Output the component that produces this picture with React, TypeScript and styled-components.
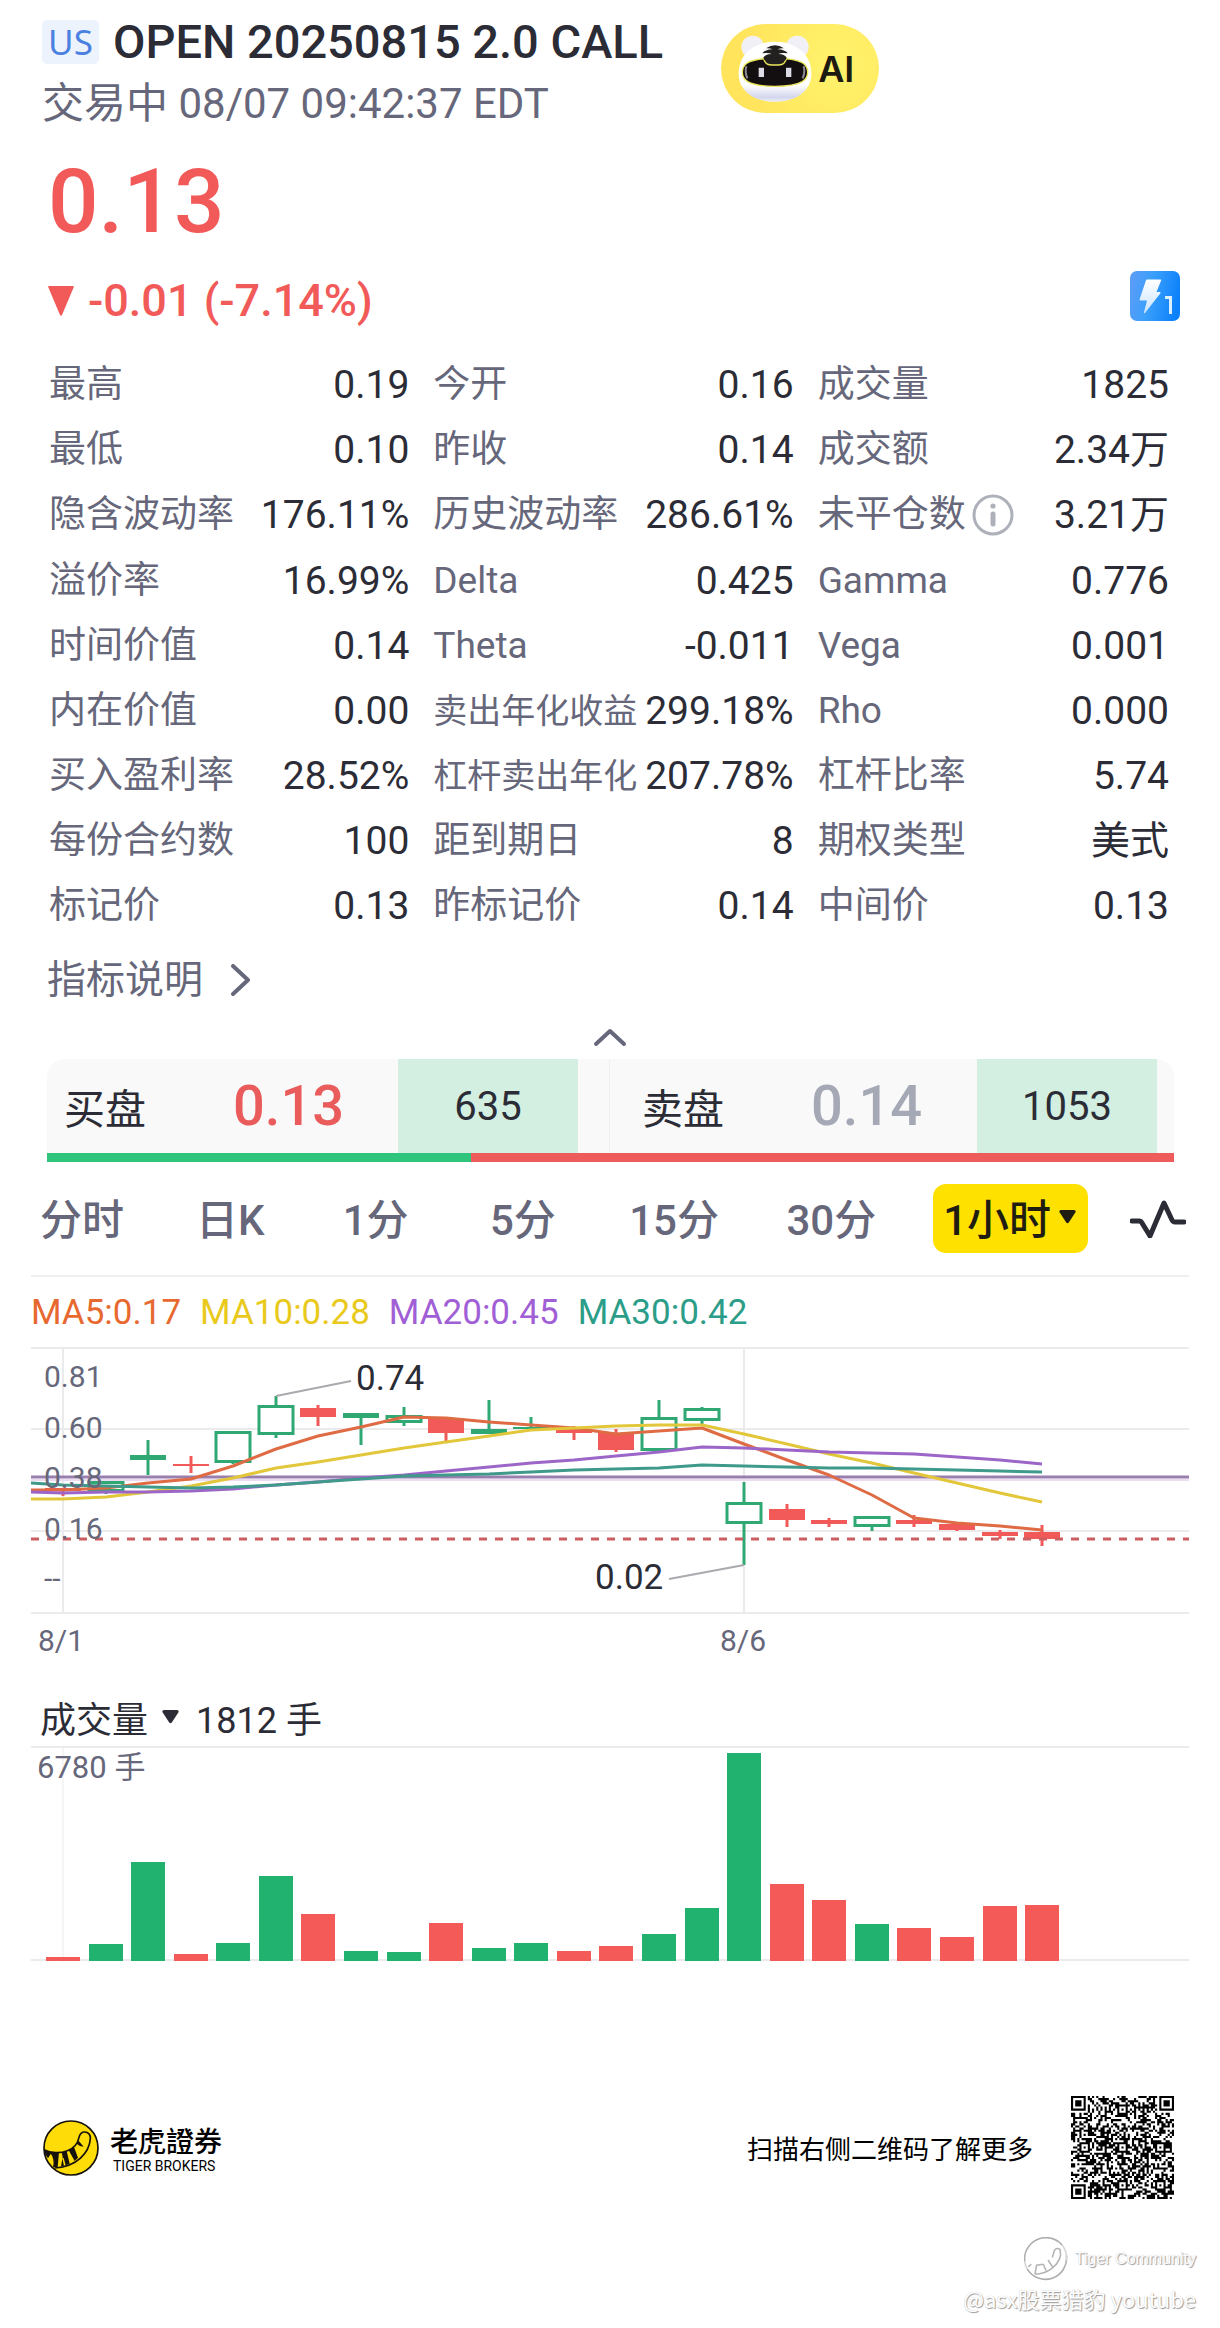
import React from "react";
import styled, { createGlobalStyle } from "styled-components";

const color = {
  ink: "#2b2c36",
  muted: "#66677a",
  faint: "#a5a9b5",
  red: "#f15a58",
  green: "#20b26e",
  candleGreen: "#2fa873",
  grid: "#ebebed",
};

const sans = `Roboto, "Noto Sans CJK SC", sans-serif`;

const GlobalStyle = createGlobalStyle`
  * { box-sizing: border-box; }
  body { margin: 0; background: #fff; color: ${color.ink}; font-family: ${sans}; }
  button { margin: 0; padding: 0; border: 0; background: none; color: inherit; font: inherit; cursor: pointer; }
  svg { display: block; }
`;

const Page = styled.main`
  display: flex;
  flex-direction: column;
  padding: 17px 0 12px;
`;

/* ---------- header ---------- */

const Header = styled.header`
  display: flex;
  align-items: flex-start;
  gap: 58px;
  padding: 0 42px;
`;

const TitleRow = styled.div`
  display: flex;
  align-items: center;
  gap: 14px;
  height: 50px;
`;

const Market = styled.span`
  display: grid;
  place-items: center;
  width: 57px;
  height: 44px;
  border-radius: 5px;
  background: #edf3fd;
  color: #4a80e0;
  font: 400 35px/44px "Noto Sans", sans-serif;
`;

const Title = styled.h1`
  margin: 0;
  font-size: 47px;
  font-weight: 500;
  line-height: 50px;
  white-space: nowrap;
`;

const Session = styled.p`
  margin: 8px 0 0;
  color: ${color.muted};
  font-size: 42px;
  line-height: 58px;
  white-space: nowrap;
`;

const AiButton = styled.button`
  display: flex;
  align-items: center;
  gap: 6px;
  width: 158px;
  height: 89px;
  margin-top: 7px;
  padding-left: 17px;
  border-radius: 45px;
  background: radial-gradient(circle at 72% 45%, #fff26c 0, #ffee66 30%, #ffe45c 75%);
  color: #1d1a12;
  font: 600 36px/44px Inter, sans-serif;
`;

const Quote = styled.section`
  padding: 21px 40px 0 48px;
  color: ${color.red};
  font-weight: 500;
`;

const Price = styled.div`
  font-size: 89px;
  line-height: 96px;
`;

const ChangeRow = styled.div`
  display: flex;
  justify-content: space-between;
  align-items: flex-start;
  margin-top: 21px;
`;

const Change = styled.div`
  display: flex;
  align-items: center;
  gap: 14px;
  font-size: 45px;
  line-height: 60px;
`;

/* ---------- metrics ---------- */

const Metrics = styled.dl`
  display: grid;
  grid-template-columns: 361fr 361fr 352fr;
  column-gap: 24px;
  margin: 21px 0 0;
  padding: 0 51px 0 49px;
`;

const Metric = styled.div`
  display: flex;
  align-items: center;
  justify-content: space-between;
  min-height: 65px;
  white-space: nowrap;
`;

const MetricName = styled.dt<{ $compact?: boolean; $tall?: boolean }>`
  display: flex;
  align-items: center;
  gap: 6px;
  padding: ${(p) => (p.$tall ? "7px 0" : "0")};
  color: ${color.muted};
  font-size: ${(p) => (p.$compact ? 34 : 37)}px;
  line-height: 52px;
`;

const MetricValue = styled.dd`
  margin: 0;
  font-size: 39px;
  line-height: 52px;
`;

const Explain = styled.button`
  display: flex;
  align-items: center;
  align-self: flex-start;
  gap: 28px;
  margin: 16px 0 0 47px;
  color: ${color.muted};
  font-size: 39px;
  line-height: 52px;
`;

const Collapse = styled.button`
  align-self: center;
  margin-top: 19px;
  padding: 2px 8px;
`;

/* ---------- bid / ask ---------- */

const Book = styled.section`
  margin: 10px 46px 0 47px;
`;

const BookRow = styled.div`
  display: grid;
  grid-template-columns: 562fr 565fr;
  height: 94px;
  border-radius: 18px 18px 0 0;
  background: #f9f9f9;
`;

const Side = styled.div<{ $ask?: boolean }>`
  display: grid;
  grid-template-columns: 169px 1fr 180px;
  align-items: center;
  padding: ${(p) => (p.$ask ? "0 17px 0 32px" : "0 31px 0 17px")};
  border-left: ${(p) => (p.$ask ? "1px solid #efeff1" : "0")};
  font-size: 41px;
`;

const SidePrice = styled.strong<{ $tone: string }>`
  color: ${(p) => p.$tone};
  font-size: 56px;
  font-weight: 500;
`;

const SideSize = styled.span`
  display: grid;
  place-items: center;
  height: 94px;
  background: #d2efe1;
  font-size: 40px;
`;

const Ratio = styled.div`
  display: grid;
  grid-template-columns: 424fr 703fr;
  height: 9px;
  background: #ed5b5b;

  &::before {
    content: "";
    background: #2fc57d;
  }
`;

/* ---------- periods ---------- */

const PeriodBar = styled.nav`
  display: grid;
  grid-template-columns: 148fr 148fr 142fr 152fr 150fr 164fr 194fr 100fr;
  align-items: center;
  justify-items: center;
  padding: 22px 12px 22px 8px;
  white-space: nowrap;
`;

const Period = styled.button<{ $active?: boolean }>`
  display: flex;
  align-items: center;
  gap: 8px;
  height: 69px;
  padding: ${(p) => (p.$active ? "0 12px 4px 10px" : "0 0 4px")};
  border-radius: 13px;
  background: ${(p) => (p.$active ? "#ffe100" : "none")};
  color: ${(p) => (p.$active ? "#1f1d12" : color.muted)};
  font-size: 42px;
  font-weight: 500;
`;

/* ---------- charts ---------- */

const ChartPanel = styled.section<{ $ruled?: boolean }>`
  margin: 0 31px;
  border-top: ${(p) => (p.$ruled ? "2px solid #efeff0" : "0")};
`;

const Averages = styled.div`
  display: flex;
  align-items: center;
  gap: 19px;
  height: 70px;
  font-size: 35px;
`;

const Average = styled.span<{ $tone: string }>`
  color: ${(p) => p.$tone};
`;

const Plot = styled.svg`
  width: 100%;
  height: auto;
  font-family: ${sans};
`;

const VolumeHead = styled.div`
  display: flex;
  align-items: center;
  gap: 17px;
  height: 52px;
  margin-top: 27px;
  padding: 0 0 6px 9px;
  font-size: 36px;
`;

const VolumePick = styled.button`
  display: flex;
  align-items: center;
  gap: 14px;
`;

/* ---------- footer ---------- */

const Footer = styled.footer`
  display: flex;
  align-items: center;
  justify-content: space-between;
  margin-top: 134px;
  padding: 0 46px 0 43px;
`;

const Brand = styled.div`
  display: flex;
  align-items: center;
  gap: 11px;
  color: #000;
`;

const BrandName = styled.div`
  font: 500 28px/36px "Noto Sans CJK TC", sans-serif;
`;

const BrandLatin = styled.div`
  padding-left: 3px;
  font-size: 14px;
  line-height: 16px;
`;

const Scan = styled.div`
  display: flex;
  align-items: center;
  gap: 38px;
  color: #000;
  font-size: 26px;
`;

const Credit = styled.aside`
  display: flex;
  flex-direction: column;
  align-items: flex-end;
  margin-top: 38px;
  padding-right: 24px;
  color: #fff;
  text-shadow: 1px 1px 1px #9a9a9a, 0 0 1px #c4c4c4;
`;

const CreditBrand = styled.div`
  display: flex;
  align-items: center;
  gap: 7px;
  font: 400 16px/44px "Liberation Sans", Arial, sans-serif;
`;

const CreditUser = styled.div`
  font: 400 22px/34px "Noto Sans CJK SC", sans-serif;
`;

/* ---------- drawings ---------- */

const Caret = () => (
  <svg width="17" height="14" viewBox="0 0 17 14" aria-hidden="true">
    <path d="M2 0h13q2.500.3 1.300 2.400L9.800 12.500q-1.300 1.500-2.600 0L.7 2.400Q-.5.3 2 0z" fill="currentColor" />
  </svg>
);

const DownMark = () => (
  <svg width="26" height="30" viewBox="0 0 26 30" aria-hidden="true">
    <path d="M1 0h24q1 0 .7 1.200L14 29q-1 1.500-2 0L.3 1.200Q0 0 1 0z" fill="currentColor" />
  </svg>
);

const Robot = () => (
  <svg width="74" height="68" viewBox="0 0 222 204" aria-hidden="true">
    <defs>
      <linearGradient id="head" x1="0" y1="0" x2="0" y2="1">
        <stop offset="0" stopColor="#fff" />
        <stop offset=".72" stopColor="#fff" />
        <stop offset=".93" stopColor="#d3d6ec" />
        <stop offset="1" stopColor="#efeff8" />
      </linearGradient>
    </defs>
    <circle cx="44" cy="36" r="34" fill="#f1f0f6" />
    <circle cx="178" cy="36" r="34" fill="#f1f0f6" />
    <path d="M111 20c66 0 109 40 109 96 0 52-46 84-109 84S2 168 2 116c0-56 43-96 109-96z" fill="url(#head)" />
    <path d="M111 70c34 0 64 3 82 13 11 7 16 17 16 28s-5 22-16 29c-18 10-48 14-82 14s-64-4-82-14c-11-7-16-18-16-29s5-21 16-28c18-10 48-13 82-13z" fill="#130f10" stroke="#ebe65c" strokeWidth="4" />
    <path d="M25 94q-5 18 3 36M197 94q5 18-3 36" fill="none" stroke="#8d8a95" strokeWidth="6" />
    <path d="M76 68q4 22 24 22h22q20 0 24-22" fill="#22211f" stroke="#ebe65c" strokeWidth="4" />
    <path d="M84 40q27-18 54 0-12-1-19 3 22 1 30 12-18-3-28 2 20 1 25 11l-4 8H80l-4-8q5-10 25-11-10-5-28-2 8-11 30-12-7-4-19-3z" fill="#22211f" />
    <path d="M62 98h16v28H62zM144 98h16v28h-16z" fill="#dcdbe6" />
  </svg>
);

const LevelOne = () => (
  <svg width="50" height="50" viewBox="0 0 50 50" role="img" aria-label="Level 1">
    <defs>
      <linearGradient id="lv" x1="0" y1="0.3" x2="1" y2="0.5">
        <stop offset="0" stopColor="#5b9cf6" />
        <stop offset=".4" stopColor="#3ba0fb" />
        <stop offset="1" stopColor="#0b80fb" />
      </linearGradient>
      <linearGradient id="bolt" x1="0" y1="0" x2="0" y2="1">
        <stop offset="0" stopColor="#fff" />
        <stop offset="1" stopColor="#c9e4ff" />
      </linearGradient>
    </defs>
    <rect width="50" height="50" rx="7" fill="url(#lv)" />
    <path d="M17 8.500h13.500q1 0 .6 1L26.500 21H30q1 .2.400 1.200L15 42q-1.300 1-1-.8L17 29.500h-6.500q-1.300-.1-.8-1.400l6.200-18.700q.3-.9 1.100-.9z" fill="url(#bolt)" />
    <path d="M35 26.500h5.500V43" fill="none" stroke="#dcefff" strokeWidth="3" />
  </svg>
);

const Info = () => (
  <svg width="42" height="42" viewBox="0 0 42 42" role="img" aria-label="info">
    <circle cx="21" cy="21" r="19" fill="none" stroke="#aeb1ba" strokeWidth="3" />
    <circle cx="21" cy="12" r="2.600" fill="#aeb1ba" />
    <path d="M21 20v10" stroke="#aeb1ba" strokeWidth="5" strokeLinecap="round" />
  </svg>
);

const Pulse = () => (
  <svg width="56" height="38" viewBox="0 0 56 38" role="img" aria-label="indicators">
    <path d="M2 21h7q2 0 3 2l8 13L34 3l8 17q1 2 3 2h9" fill="none" stroke="#2b2c36" strokeWidth="5" strokeLinecap="round" strokeLinejoin="round" />
  </svg>
);

const TigerLogo = () => (
  <svg width="56" height="56" viewBox="130 118 168 168" aria-hidden="true">
    <circle cx="214" cy="202" r="81" fill="#fddc07" stroke="#16120a" strokeWidth="5" />
    <path d="M133 207c20 10 48 12 70 3 22-8 32-24 35-40 3-12 9-16 17-16 11 0 18 8 17 20-3 42-40 84-107 88" fill="none" stroke="#16120a" strokeWidth="5" />
    <path d="M132 206l23 11-10 16q-11-12-13-27zM150 214l28 1-4 44-14 1q7-24-10-46zM186 215l15-4 9 38-12 5-6-22-4 1 5 22-9 2 5-28zM207 209l16-10 12 32-10 10zM231 189l6-9 15 18q-12 0-21-9z" fill="#16120a" />
  </svg>
);

const TigerOutline = () => (
  <svg width="44" height="44" viewBox="130 118 168 168" aria-hidden="true">
    <g fill="none" strokeWidth="6">
      <path d="M133 212a81 81 0 0 1 24-68 81 81 0 0 1 118 4M292 188a81 81 0 0 1-150 52" stroke="#adadad" />
      <path d="M275 148a81 81 0 0 1 17 60M142 240q-8-14-9-28" stroke="#d6d6d6" />
      <path d="M146 232l12-10M172 260l6-34 26-4M204 222l10 24M222 206l18 28M238 196l8-26q8-14 22-4 10 40-34 74-26 20-62 20" stroke="#b4b4b4" />
    </g>
  </svg>
);

const QR_SIZE = 49;

function qrModules() {
  const cells: boolean[][] = [];
  let seed = 20250815;
  for (let y = 0; y < QR_SIZE; y++) {
    cells.push([]);
    for (let x = 0; x < QR_SIZE; x++) {
      seed = (Math.imul(seed, 1664525) + 1013904223) >>> 0;
      cells[y].push(seed >>> 16 > 32000);
    }
  }
  const ring = (cx: number, cy: number, reach: number, light: number[]) => {
    for (let dy = -reach; dy <= reach; dy++)
      for (let dx = -reach; dx <= reach; dx++) {
        const row = cells[cy + dy];
        if (!row || cx + dx < 0 || cx + dx >= QR_SIZE) continue;
        row[cx + dx] = !light.includes(Math.max(Math.abs(dx), Math.abs(dy)));
      }
  };
  for (let i = 8; i < QR_SIZE - 8; i++) {
    cells[6][i] = i % 2 === 0;
    cells[i][6] = i % 2 === 0;
  }
  [[24, 6], [6, 24], [24, 24], [42, 24], [24, 42], [42, 42]].forEach(([x, y]) => ring(x, y, 2, [1]));
  [[3, 3], [QR_SIZE - 4, 3], [3, QR_SIZE - 4]].forEach(([x, y]) => ring(x, y, 4, [2, 4]));
  return cells;
}

const QrCode = () => {
  const d = qrModules()
    .map((row, y) => row.map((on, x) => (on ? `M${x} ${y}h1v1h-1z` : "")).join(""))
    .join("");
  return (
    <svg width="103" height="103" viewBox={`0 0 ${QR_SIZE} ${QR_SIZE}`} role="img" aria-label="QR">
      <path d={d} fill="#000" />
    </svg>
  );
};

/* ---------- data ---------- */

type MetricItem = { name: string; value: string; compact?: boolean; info?: boolean };

const metrics: MetricItem[] = [
  { name: "最高", value: "0.19" },
  { name: "今开", value: "0.16" },
  { name: "成交量", value: "1825" },
  { name: "最低", value: "0.10" },
  { name: "昨收", value: "0.14" },
  { name: "成交额", value: "2.34万" },
  { name: "隐含波动率", value: "176.11%" },
  { name: "历史波动率", value: "286.61%" },
  { name: "未平仓数", value: "3.21万", info: true },
  { name: "溢价率", value: "16.99%" },
  { name: "Delta", value: "0.425" },
  { name: "Gamma", value: "0.776" },
  { name: "时间价值", value: "0.14" },
  { name: "Theta", value: "-0.011" },
  { name: "Vega", value: "0.001" },
  { name: "内在价值", value: "0.00" },
  { name: "卖出年化收益", value: "299.18%", compact: true },
  { name: "Rho", value: "0.000" },
  { name: "买入盈利率", value: "28.52%" },
  { name: "杠杆卖出年化", value: "207.78%", compact: true },
  { name: "杠杆比率", value: "5.74" },
  { name: "每份合约数", value: "100" },
  { name: "距到期日", value: "8" },
  { name: "期权类型", value: "美式" },
  { name: "标记价", value: "0.13" },
  { name: "昨标记价", value: "0.14" },
  { name: "中间价", value: "0.13" },
];

const periods = ["分时", "日K", "1分", "5分", "15分", "30分"];

type Kind = "down" | "up" | "hollow";
/* kind, body top, body bottom, wick top, wick bottom, volume height */
const candles: [Kind, number, number, number, number, number][] = [
  ["down", 141, 144, 141, 149, 4],
  ["hollow", 134, 145, 134, 147, 17],
  ["up", 108, 113, 93, 128, 99],
  ["down", 117, 119, 109, 126, 7],
  ["hollow", 84, 116, 84, 117, 18],
  ["hollow", 58, 88, 49, 91, 85],
  ["down", 61, 70, 58, 79, 47],
  ["up", 66, 71, 66, 98, 10],
  ["hollow", 68, 76, 60, 79, 9],
  ["down", 72, 86, 72, 94, 38],
  ["up", 82, 87, 53, 87, 13],
  ["up", 80, 82, 70, 82, 18],
  ["down", 82, 86, 79, 93, 10],
  ["down", 86, 103, 82, 105, 15],
  ["hollow", 70, 104, 53, 104, 27],
  ["hollow", 61, 74, 60, 78, 53],
  ["hollow", 155, 177, 135, 218, 208],
  ["down", 162, 173, 157, 180, 77],
  ["down", 173, 177, 171, 180, 61],
  ["hollow", 169, 180, 169, 184, 37],
  ["down", 173, 177, 168, 180, 33],
  ["down", 177, 183, 177, 184, 24],
  ["down", 185, 189, 183, 192, 55],
  ["down", 185, 192, 178, 199, 56],
];

const averages = [
  { label: "MA5:0.17", tone: "#e8692f", line: "#df6b44", ys: [143, 143, 141, 136, 132, 119, 102, 89, 80, 70, 71, 75, 78, 81, 87, 84, 81, 97, 113, 128, 148, 171, 176, 179, 183] },
  { label: "MA10:0.28", tone: "#e9c91c", line: "#e2c73a", ys: [152, 152, 150, 145, 139, 131, 121, 115, 108, 101, 95, 89, 83, 81, 79, 78, 78, 87, 97, 107, 116, 126, 136, 146, 155] },
  { label: "MA20:0.45", tone: "#a15fd6", line: "#9c66c8", ys: [145, 146, 145, 145, 144, 142, 138, 135, 131, 128, 124, 120, 116, 113, 109, 105, 100, 101, 103, 105, 106, 107, 110, 113, 117] },
  { label: "MA30:0.42", tone: "#2b9d88", line: "#3f9a8b", ys: [136, 138, 139, 140, 141, 140, 138, 135, 132, 129, 128, 127, 125, 123, 122, 121, 118, 119, 120, 121, 121, 122, 123, 124, 125] },
];

const slotX = (i: number) => Math.round(32 + i * 42.57);

const PriceChart = () => (
  <Plot viewBox="0 0 1158 320" role="img" aria-label="K线图">
    <g stroke={color.grid} strokeWidth="2">
      <path d="M0 1H1158M0 82H1158M0 184H1158M0 266H1158M32 0V266M713 0V266" />
      <path d="M0 133H1158" stroke="#ecdcf2" />
    </g>
    {candles.map(([kind, top, bottom, high, low], i) => {
      const x = slotX(i);
      const tone = kind === "down" ? color.red : color.candleGreen;
      return (
        <g key={i}>
          {kind === "hollow" ? (
            <>
              <path d={`M${x} ${high}V${top}M${x} ${bottom}V${low}`} stroke={tone} strokeWidth="3" />
              <rect x={x - 17} y={top + 1.5} width="34" height={bottom - top - 3} fill="#fff" stroke={tone} strokeWidth="3" />
            </>
          ) : (
            <>
              <path d={`M${x} ${high}V${low}`} stroke={tone} strokeWidth="3" />
              <rect x={x - 18} y={top} width="36" height={bottom - top} fill={tone} />
            </>
          )}
        </g>
      );
    })}
    <path d="M0 130H1158" stroke="#997fae" strokeWidth="3" />
    {averages.map((a) => (
      <polyline
        key={a.label}
        points={a.ys.map((y, i) => `${i === 0 ? 0 : slotX(i - 1)},${y}`).join(" ")}
        fill="none"
        stroke={a.line}
        strokeWidth="3"
        strokeLinejoin="round"
      />
    ))}
    <path d="M0 192H1158" stroke="#cd5d5f" strokeWidth="3" strokeDasharray="8 8" />
    <path d="M245 49L320 34M638 232L713 218" stroke="#a9a9ae" strokeWidth="2" />
    <g fill={color.ink} fontSize="35">
      <text x="325" y="43">0.74</text>
      <text x="564" y="242">0.02</text>
    </g>
    <g fill={color.muted} fontSize="30">
      <text x="13" y="40">0.81</text>
      <text x="13" y="91">0.60</text>
      <text x="13" y="141">0.38</text>
      <text x="13" y="192">0.16</text>
      <text x="13" y="242">--</text>
      <text x="30" y="304" textAnchor="middle">8/1</text>
      <text x="712" y="304" textAnchor="middle">8/6</text>
    </g>
  </Plot>
);

const VolumeChart = () => (
  <Plot viewBox="0 0 1158 216" role="img" aria-label="成交量">
    <path d="M0 1H1158M0 214H1158" stroke={color.grid} strokeWidth="2" />
    <path d="M32 0V216" stroke={color.grid} strokeWidth="1" />
    {candles.map(([kind, , , , , height], i) => (
      <rect key={i} x={slotX(i) - 17} y={215 - height} width="34" height={height} fill={kind === "down" ? "#f45b58" : color.green} />
    ))}
    <text x="6" y="32" fill={color.muted} fontSize="31">6780 手</text>
  </Plot>
);

export default function App() {
  return (
    <Page>
      <GlobalStyle />
      <Header>
        <div>
          <TitleRow>
            <Market>US</Market>
            <Title>OPEN 20250815 2.0 CALL</Title>
          </TitleRow>
          <Session>交易中 08/07 09:42:37 EDT</Session>
        </div>
        <AiButton type="button">
          <Robot />
          AI
        </AiButton>
      </Header>

      <Quote>
        <Price>0.13</Price>
        <ChangeRow>
          <Change>
            <DownMark />
            -0.01 (-7.14%)
          </Change>
          <LevelOne />
        </ChangeRow>
      </Quote>

      <Metrics>
        {metrics.map((m) => (
          <Metric key={m.name}>
            <MetricName $compact={m.compact} $tall={m.info}>
              {m.name}
              {m.info && <Info />}
            </MetricName>
            <MetricValue>{m.value}</MetricValue>
          </Metric>
        ))}
      </Metrics>

      <Explain type="button">
        指标说明
        <svg width="20" height="32" viewBox="0 0 20 32" aria-hidden="true">
          <path d="M2 2l15 14L2 30" fill="none" stroke="currentColor" strokeWidth="4" strokeLinecap="round" strokeLinejoin="round" />
        </svg>
      </Explain>

      <Collapse type="button" aria-label="收起">
        <svg width="34" height="20" viewBox="0 0 34 20" aria-hidden="true">
          <path d="M3 17L17 4l14 13" fill="none" stroke={color.muted} strokeWidth="4" strokeLinecap="round" strokeLinejoin="round" />
        </svg>
      </Collapse>

      <Book>
        <BookRow>
          <Side>
            <span>买盘</span>
            <SidePrice $tone="#e95c5b">0.13</SidePrice>
            <SideSize>635</SideSize>
          </Side>
          <Side $ask>
            <span>卖盘</span>
            <SidePrice $tone={color.faint}>0.14</SidePrice>
            <SideSize>1053</SideSize>
          </Side>
        </BookRow>
        <Ratio />
      </Book>

      <PeriodBar>
        {periods.map((p) => (
          <Period key={p} type="button">
            {p}
          </Period>
        ))}
        <Period type="button" $active>
          1小时
          <Caret />
        </Period>
        <button type="button">
          <Pulse />
        </button>
      </PeriodBar>

      <ChartPanel $ruled>
        <Averages>
          {averages.map((a) => (
            <Average key={a.label} $tone={a.tone}>
              {a.label}
            </Average>
          ))}
        </Averages>
        <PriceChart />
      </ChartPanel>

      <ChartPanel>
        <VolumeHead>
          <VolumePick type="button">
            成交量
            <Caret />
          </VolumePick>
          <span>1812 手</span>
        </VolumeHead>
        <VolumeChart />
      </ChartPanel>

      <Footer>
        <Brand>
          <TigerLogo />
          <div>
            <BrandName>老虎證券</BrandName>
            <BrandLatin>TIGER BROKERS</BrandLatin>
          </div>
        </Brand>
        <Scan>
          扫描右侧二维码了解更多
          <QrCode />
        </Scan>
      </Footer>

      <Credit>
        <CreditBrand>
          <TigerOutline />
          Tiger Community
        </CreditBrand>
        <CreditUser>@asx股票猎豹 youtube</CreditUser>
      </Credit>
    </Page>
  );
}
